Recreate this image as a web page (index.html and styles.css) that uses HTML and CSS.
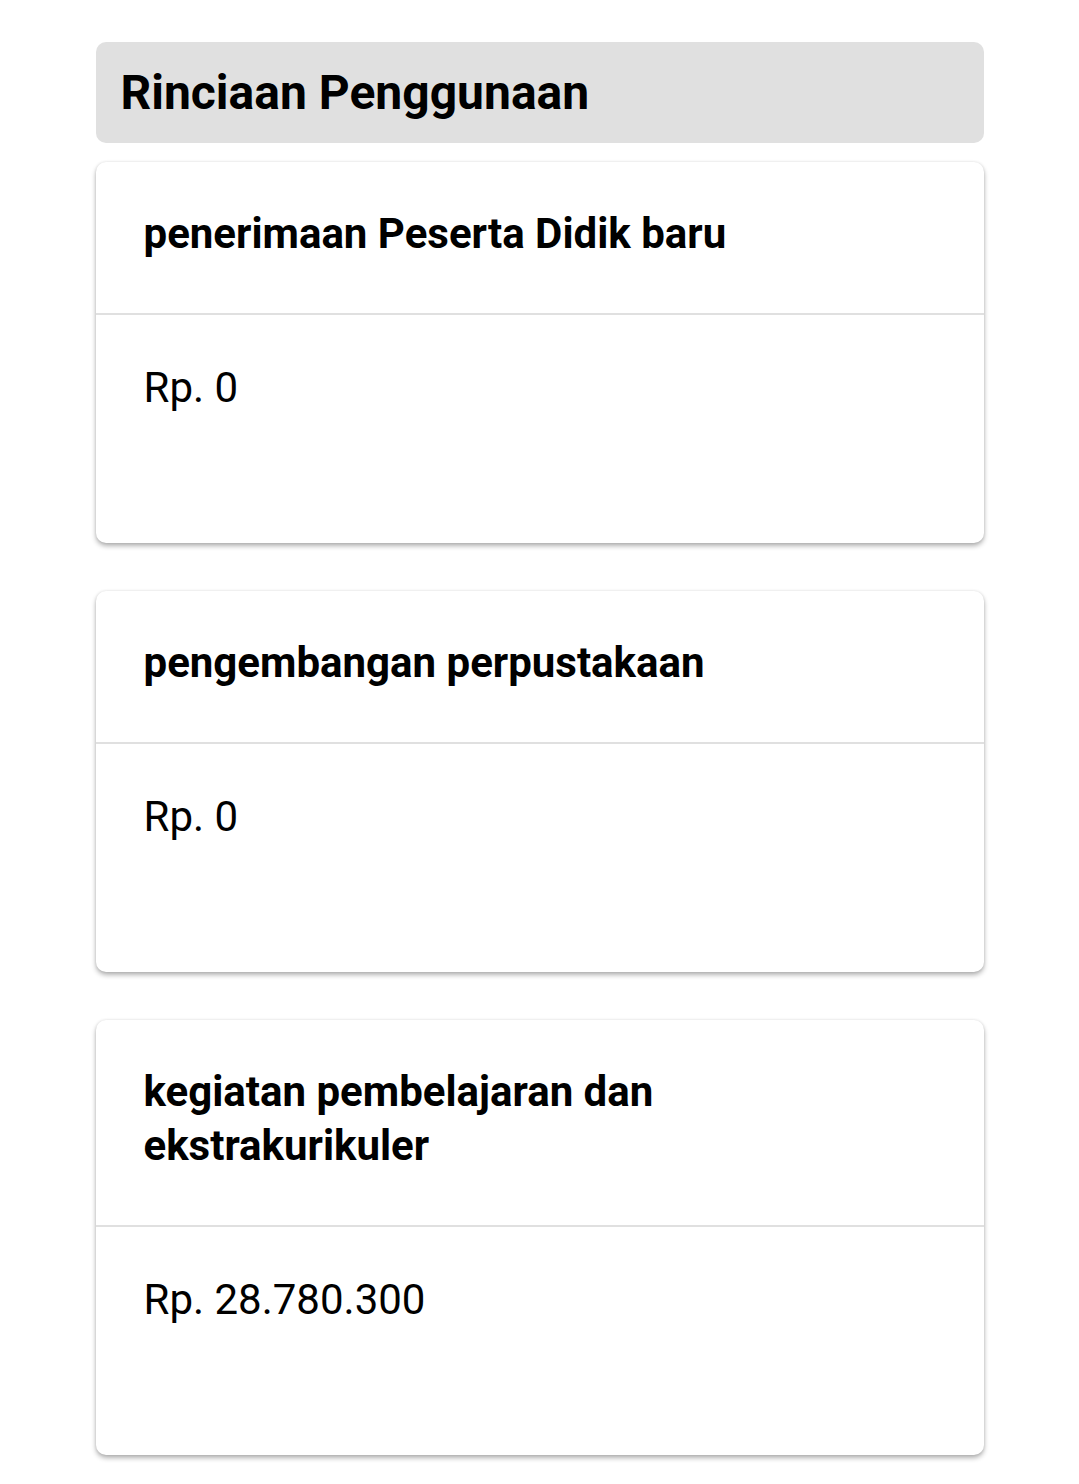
FILE: index.html
```html
<!DOCTYPE html>
<html lang="id">
<head>
<meta charset="utf-8">
<title>Rinciaan Penggunaan</title>
<link rel="stylesheet" href="styles.css">
</head>
<body>
<main class="page">
  <header class="section-head">
    <h1 class="section-title">Rinciaan Penggunaan</h1>
  </header>
  <div class="card-list">
    <article class="card">
      <div class="card-head"><h2 class="card-title">penerimaan Peserta Didik baru</h2></div>
      <div class="card-body"><p class="amount">Rp. 0</p></div>
    </article>
    <article class="card">
      <div class="card-head"><h2 class="card-title">pengembangan perpustakaan</h2></div>
      <div class="card-body"><p class="amount">Rp. 0</p></div>
    </article>
    <article class="card">
      <div class="card-head"><h2 class="card-title">kegiatan pembelajaran dan<br>ekstrakurikuler</h2></div>
      <div class="card-body"><p class="amount">Rp. 28.780.300</p></div>
    </article>
  </div>
</main>
</body>
</html>
```

FILE: styles.css
```css
* { box-sizing: border-box; }
html, body { margin: 0; padding: 0; background: #ffffff; }
body { font-family: Roboto, "Noto Sans", sans-serif; color: #000; }

.page {
  width: 888px;
  margin: 0 auto;
  padding: 42px 0 40px;
}

.section-head {
  background: #e0e0e0;
  border-radius: 10px;
  height: 101px;
  display: flex;
  align-items: center;
  padding: 0 25px;
}
.section-title {
  margin: 0;
  font-size: 48px;
  font-weight: 700;
  line-height: 1;
}

.card-list {
  margin-top: 19px;
  display: flex;
  flex-direction: column;
  gap: 48px;
}

.card {
  background: #fff;
  border-radius: 10px;
  box-shadow: 0 3px 5px rgba(0,0,0,0.3), 0 0 3px rgba(0,0,0,0.1);
  overflow: hidden;
}
.card-head {
  padding: 45px 48px 52px;
  border-bottom: 2px solid #e0e0e0;
}
.card-title {
  margin: 0;
  font-size: 42px;
  font-weight: 700;
  line-height: 54px;
}
.card-body {
  padding: 46px 48px 128px;
}
.amount {
  margin: 0;
  font-size: 42px;
  font-weight: 400;
  line-height: 54px;
}
```
